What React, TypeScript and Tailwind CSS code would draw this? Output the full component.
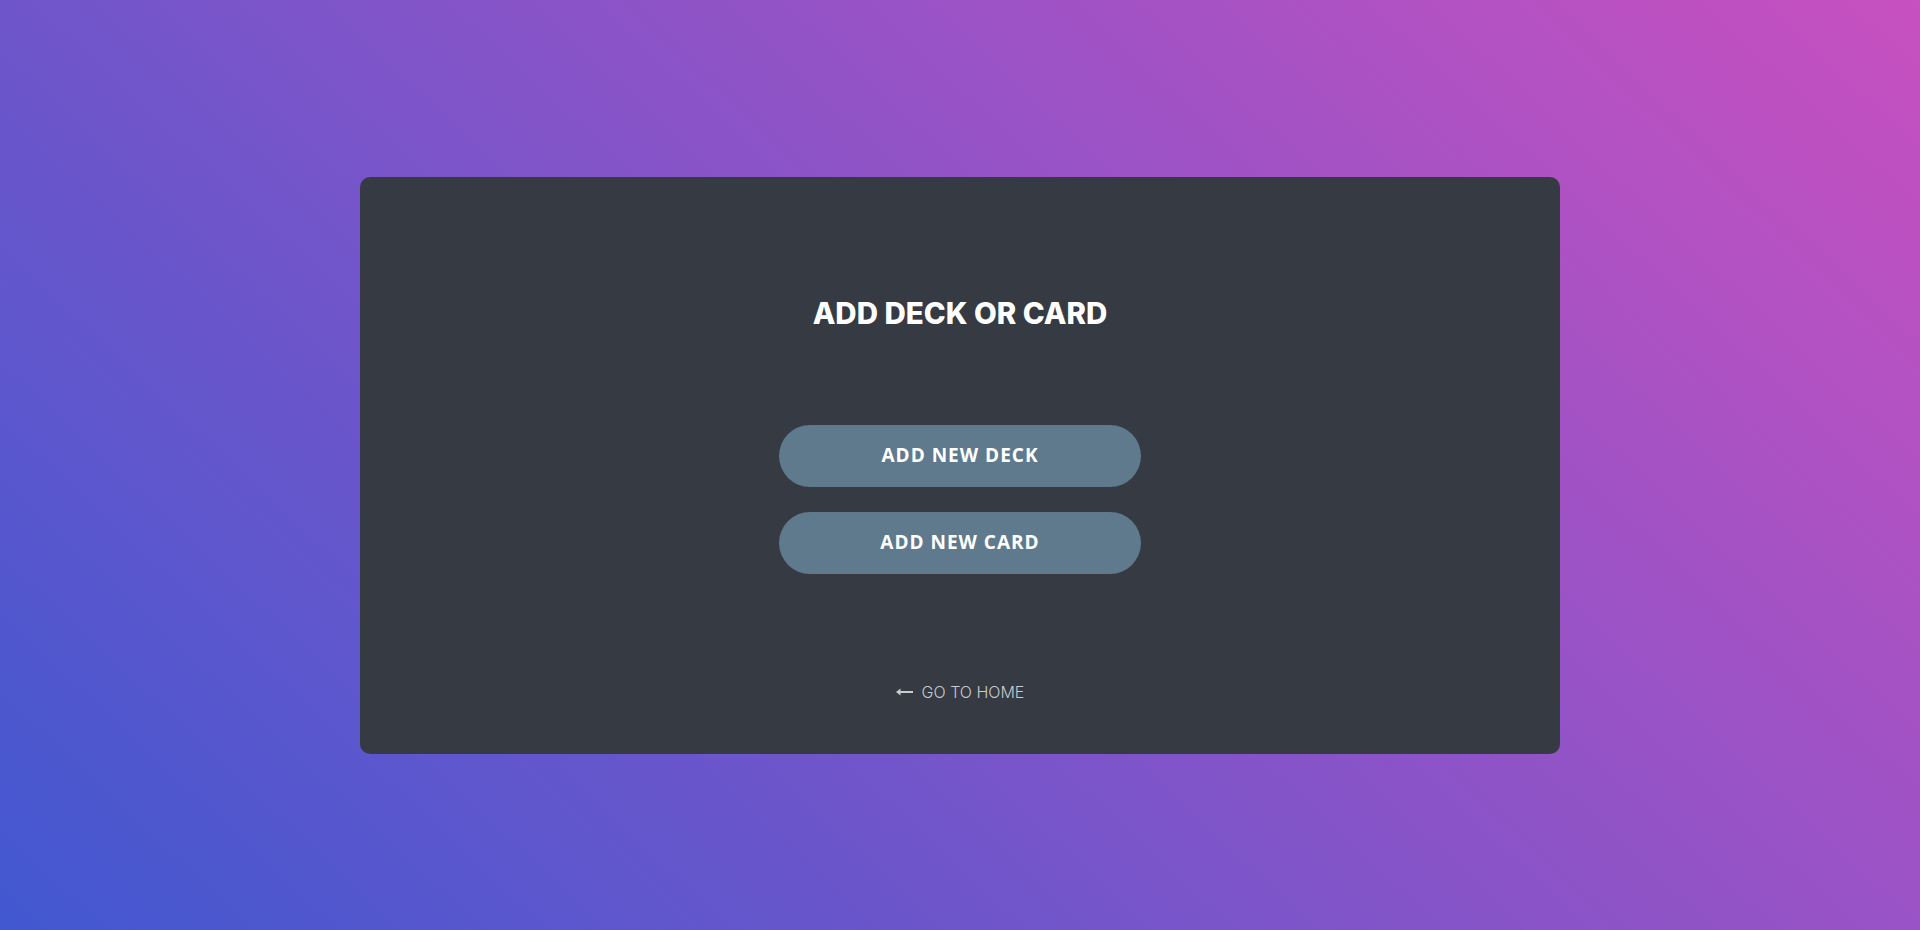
import React from 'react';

const ActionButton: React.FC<{ label: string }> = ({ label }) => (
  <button className="w-[362px] h-[62px] rounded-full bg-[#5f7a8d] text-white text-[19px] font-bold tracking-[1px] font-['Open_Sans',sans-serif]">
    {label}
  </button>
);

const App: React.FC = () => {
  return (
    <div className="w-full h-[930px] flex items-center justify-center bg-[linear-gradient(43deg,#4158D0_0%,#C850C0_100%)]">
      <div className="w-[1200px] h-[577px] rounded-[10px] bg-[#363a42] flex flex-col items-center pt-[121px]">
        <h1 className="text-[29.5px] leading-[30px] font-extrabold text-white font-['Inter',sans-serif]">
          ADD DECK OR CARD
        </h1>
        <div className="mt-[97px] flex flex-col gap-[25px]">
          <ActionButton label="ADD NEW DECK" />
          <ActionButton label="ADD NEW CARD" />
        </div>
        <a href="#" className="mt-[106px] flex items-center gap-[9px] text-[#c9cbcf] text-[16px] leading-6 font-light font-['Inter',sans-serif]">
          <svg width="17" height="8" viewBox="0 0 17 8" fill="none">
            <path d="M17 4H3" stroke="currentColor" strokeWidth="2" />
            <path d="M0 4L4.5 0.5V7.5Z" fill="currentColor" />
          </svg>
          GO TO HOME
        </a>
      </div>
    </div>
  );
};

export default App;
